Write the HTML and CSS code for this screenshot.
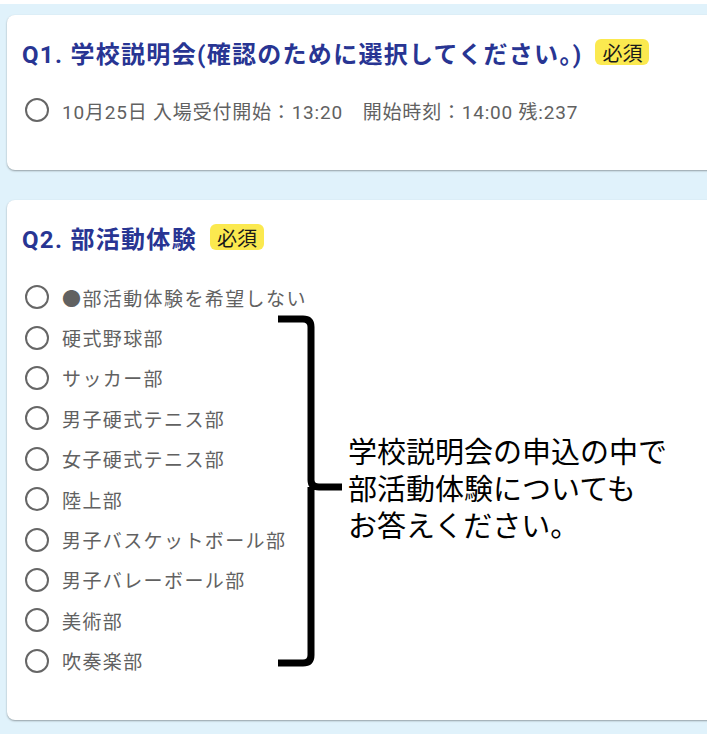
FILE: index.html
```html
<!DOCTYPE html>
<html lang="ja">
<head>
<meta charset="utf-8">
<link rel="stylesheet" href="styles.css">
</head>
<body>
<div class="page">
  <section class="card card-q1">
    <h2 class="q-title">Q1. 学校説明会(確認のために選択してください。)<span class="req">必須</span></h2>
    <ul class="options options-q1">
      <li class="opt"><span class="radio"></span><span class="label">10月25日 入場受付開始：13:20　開始時刻：14:00 残:237</span></li>
    </ul>
  </section>
  <section class="card card-q2">
    <h2 class="q-title">Q2. 部活動体験<span class="req">必須</span></h2>
    <ul class="options options-q2">
      <li class="opt"><span class="radio"></span><span class="label">●部活動体験を希望しない</span></li>
      <li class="opt"><span class="radio"></span><span class="label">硬式野球部</span></li>
      <li class="opt"><span class="radio"></span><span class="label">サッカー部</span></li>
      <li class="opt"><span class="radio"></span><span class="label">男子硬式テニス部</span></li>
      <li class="opt"><span class="radio"></span><span class="label">女子硬式テニス部</span></li>
      <li class="opt"><span class="radio"></span><span class="label">陸上部</span></li>
      <li class="opt"><span class="radio"></span><span class="label">男子バスケットボール部</span></li>
      <li class="opt"><span class="radio"></span><span class="label">男子バレーボール部</span></li>
      <li class="opt"><span class="radio"></span><span class="label">美術部</span></li>
      <li class="opt"><span class="radio"></span><span class="label">吹奏楽部</span></li>
    </ul>
    <div class="note">
      <svg class="brace" width="70" height="360" viewBox="0 0 70 360">
        <path d="M3 4 H28 Q36 4 36 12 V165 Q36 172 44 172 H67 M36 172 Q36 180 36 186 V340 Q36 348 28 348 H3" fill="none" stroke="#000" stroke-width="7"/>
      </svg>
      <p class="note-text">学校説明会の申込の中で<br>部活動体験についても<br>お答えください。</p>
    </div>
  </section>
</div>
</body>
</html>
```
FILE: styles.css
```css
* { box-sizing: border-box; }
html, body { margin: 0; padding: 0; }
body {
  background: #fff;
  font-family: Roboto, "Noto Sans CJK JP", sans-serif;
  overflow: hidden;
}
.page {
  margin-top: 4px;
  background: #e0f2fb;
  height: 730px;
  padding: 11px 0 0 7px;
  overflow: hidden;
}
.card {
  position: relative;
  background: #fff;
  border-radius: 8px;
  margin-right: -20px;
  box-shadow: 0 1px 2px rgba(0,0,0,0.35);
  padding: 22px 15px 0 15px;
}
.card-q1 { height: 155px; }
.card-q2 { height: 520px; margin-top: 30px; }
.q-title {
  margin: 0;
  display: flex;
  align-items: center;
  height: 30px;
  font-size: 24px;
  letter-spacing: 1.3px;
  font-weight: 700;
  color: #283593;
  white-space: nowrap;
}
.req {
  margin-left: 13px;
  background: #fbe94f;
  border-radius: 6px;
  height: 26px;
  padding: 0 7px;
  display: inline-flex;
  align-items: center;
  font-size: 20px;
  letter-spacing: 0;
  font-weight: 400;
  color: #1a1a1a;
}
.options {
  list-style: none;
  margin: 0;
  padding: 0 0 0 3px;
}
.options-q1 { margin-top: 31px; }
.options-q2 { margin-top: 25px; }
.opt {
  display: flex;
  align-items: center;
  height: 24px;
  color: #616161;
  white-space: nowrap;
}
.options-q2 .opt { height: 40.4px; }
.radio {
  width: 24px;
  height: 24px;
  border: 2px solid #666;
  border-radius: 50%;
  flex: none;
  margin-right: 13px;
}
.label { font-size: 19px; letter-spacing: 0.8px; }
.options-q2 .label { letter-spacing: 1.4px; }
.note {
  position: absolute;
  left: 268px;
  top: 115px;
  display: flex;
  align-items: flex-start;
}
.brace { display: block; flex: none; }
.note-text {
  margin: 117px 0 0 3px;
  font-family: "Noto Sans CJK JP", sans-serif;
  font-size: 29px;
  line-height: 37px;
  color: #000;
  white-space: nowrap;
}
```
